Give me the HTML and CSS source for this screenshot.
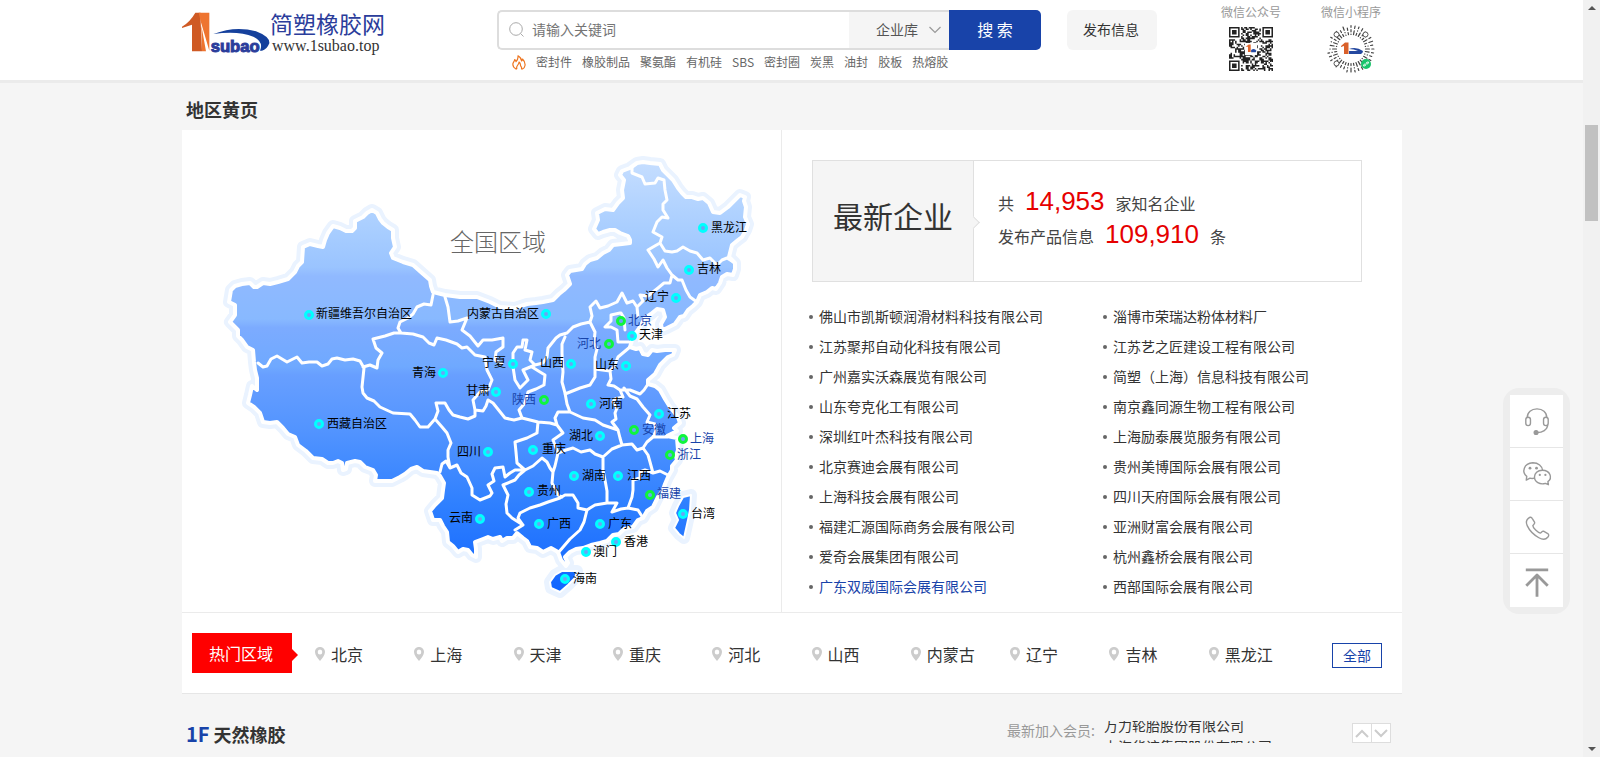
FILE: index.html
```html
<!DOCTYPE html>
<html lang="zh-CN">
<head>
<meta charset="utf-8">
<title>简塑橡胶网</title>
<link rel="stylesheet" href="styles.css">
</head>
<body>
<header class="site-header">
  <div class="wrap header-row">
    <a class="logo" href="#" aria-label="简塑橡胶网">
      <svg class="logo-mark" viewBox="0 0 264 144" width="88" height="48" aria-hidden="true">
        <path fill="#cf5a24" d="M0 50Q24 36 40 8H56V34L60 124H30V44L0 54z"/>
        <path fill="#ee7430" d="M42 8H82V122L56 34L50 8zM58 46L72 124H60z"/>
        <text class="logo-word" x="86" y="125">subao</text>
        <path fill="#15409c" d="M94 72Q160 46 222 64Q264 80 262 100Q254 120 240 122L234 122Q246 96 214 80Q170 62 94 72z"/>
      </svg>
      <span class="logo-text"><span class="logo-name">简塑橡胶网</span><span class="logo-url">www.1subao.top</span></span>
    </a>
    <div class="search">
      <form class="search-form">
        <label class="search-box">
          <svg width="16" height="16" viewBox="0 0 16 16" fill="none" stroke="#aaa" aria-hidden="true"><circle cx="7" cy="7" r="6.3"/><path d="M11.5 11.5L14.5 14.5"/></svg>
          <input type="text" placeholder="请输入关键词" aria-label="关键词">
        </label>
        <span class="kind">
          <select aria-label="搜索类型"><option>企业库</option></select>
          <svg width="12" height="8" viewBox="0 0 12 8" fill="none" stroke="#999" stroke-width="1.2" aria-hidden="true"><path d="M.5 1L6 6.5L11.5 1"/></svg>
        </span>
        <button type="button" class="search-btn">搜 索</button>
      </form>
      <nav class="hot-words">
        <svg width="14" height="15" viewBox="0 0 14 15" fill="none" stroke="#ee7520" stroke-width="1.2" stroke-linecap="round" stroke-linejoin="round" aria-hidden="true"><path d="M4 14C1.500 12.500.500 10.500 1 8.500C1.300 7 2.500 6.500 2.700 4.500C3.600 5 4 6 4 6.700C5.500 5 6.300 3 6 .8C8.500 2.300 9.500 4 9.600 6C10.300 5.600 10.500 4.800 10.500 4C12.500 6 13.300 8.500 13 10.500C12.700 12.500 11.800 13.500 10.500 14M4.800 13.800C4.200 12 5 11 5.800 10C6.600 9 7.200 8 7 7C9.300 8.500 7.800 10.500 9 11.500C9.700 12.200 9.800 13 9.500 14"/></svg>
        <a href="#">密封件</a><a href="#">橡胶制品</a><a href="#">聚氨酯</a><a href="#">有机硅</a><a href="#">SBS</a><a href="#">密封圈</a><a href="#">炭黑</a><a href="#">油封</a><a href="#">胶板</a><a href="#">热熔胶</a>
      </nav>
    </div>
    <button type="button" class="publish">发布信息</button>
    <div class="codes">
      <figure><figcaption>微信公众号</figcaption>
        <svg width="44" height="44" viewBox="0 0 29 29" aria-hidden="true">
          <path id="qr" fill="#222"/>
          <path fill="#fff" d="M10.500 10.500h8v8h-8z"/>
          <path fill="#e0662b" d="M11 13l2-1.500h1.300v5h-1.800v-3.500z"/>
          <path fill="#2448a0" d="M14.600 15.200q2-1.500 3.500.5l-.5.900h-3z"/>
        </svg>
      </figure>
      <figure><figcaption>微信小程序</figcaption>
        <svg width="48" height="48" viewBox="0 0 48 48" aria-hidden="true">
          <path id="mini" fill="none" stroke="#444" stroke-width="1.200" stroke-linecap="round"/>
          <g fill="#fff" stroke="#555"><circle cx="9.500" cy="9.500" r="2.500"/><circle cx="38.500" cy="9.500" r="2.500"/><circle cx="9.500" cy="38.500" r="2.500"/></g>
          <path fill="#d9602a" d="M14 21l4-3.500h3.500V29H17v-8l-3 1z"/>
          <path fill="#2448a0" d="M22 24q7-3 14 2q0 2-2 3h-12v-3h9q-4-2-9-2z"/>
          <circle cx="39" cy="39" r="5" fill="#19c46b"/>
          <path fill="none" stroke="#fff" stroke-width=".9" d="M39.500 37.500q2.500-1.500 2 .5q-.5 1-1.500 1M38.500 40.500q-2.500 1.500-2-.5q.5-1 1.500-1M38.500 40.500l1-3"/>
        </svg>
      </figure>
    </div>
  </div>
</header>

<main class="wrap">
  <h2 class="section-title">地区黄页</h2>
  <section class="panel">
    <div class="region">
      <svg class="map" viewBox="182 130 599 482" role="img" aria-label="全国区域">
        <defs>
          <linearGradient id="land" gradientUnits="userSpaceOnUse" x1="0" y1="160" x2="0" y2="590">
            <stop offset="0" stop-color="#c6deff"/><stop offset=".16" stop-color="#a9ceff"/><stop offset=".25" stop-color="#9ac4ff"/><stop offset=".27" stop-color="#90b9ff"/><stop offset=".37" stop-color="#88b9ff"/><stop offset=".39" stop-color="#7cabff"/><stop offset=".48" stop-color="#6fa9ff"/><stop offset=".5" stop-color="#689fff"/><stop offset=".63" stop-color="#5294ff"/><stop offset=".8" stop-color="#2f80ff"/><stop offset="1" stop-color="#1266ff"/>
          </linearGradient>
          <path id="outline" d="M231 290L235 286L242 284L250 283L254 287L257 287L263 283L270 284L278 282L288 279L295 272L298 266L302 262L303 247L310 244L318 246L323 247L325 240L328 233L333 226L340 228L346 231L352 231L355 228L355 221L363 217L367 213L372 210L377 213L380 219L383 223L388 227L393 230L393 238L395 247L391 253L393 258L403 262L413 265L422 273L430 280L431 286L433 292L445 295L460 297L477 297L490 302L500 307L515 308L527 304L536 303L543 302L553 300L559 294L564 290L570 284L567 275L570 271L582 269L585 264L590 260L597 258L603 253L609 250L613 245L622 244L630 243L630 240L628 236L620 233L615 230L610 230L603 232L598 234L594 229L598 220L597 213L605 209L613 210L618 203L623 198L622 190L624 180L620 175L622 171L630 168L637 163L643 162L650 163L660 164L663 170L667 174L673 180L678 188L682 193L686 197L692 197L698 199L703 198L709 203L713 212L720 213L728 207L734 201L740 195L745 197L744 201L746 207L745 217L748 224L746 230L742 237L738 240L732 245L729 257L735 263L735 269L733 275L727 274L722 277L720 283L716 289L712 288L707 292L700 295L697 302L693 306L688 310L684 316L680 317L675 324L667 328L662 330L661 324L665 317L663 310L657 309L651 314L645 318L640 327L633 337L630 347L636 349L640 348L643 354L648 355L652 350L657 351L665 350L675 350L673 355L668 357L660 365L655 374L648 380L648 384L655 386L660 390L665 399L670 407L678 417L680 423L674 428L677 431L667 436L677 438L678 450L676 456L677 460L672 466L672 470L668 477L665 484L663 490L658 497L653 507L647 511L643 518L638 520L633 527L624 529L619 534L613 535L607 541L600 543L591 545L583 548L576 549L570 552L565 557L568 563L566 566L561 560L558 552L551 548L543 552L537 548L530 547L527 541L523 538L517 533L513 538L507 538L502 541L500 537L493 539L488 537L483 539L475 542L476 549L476 557L472 555L468 550L463 549L458 552L453 546L448 542L447 532L443 526L440 520L433 520L430 511L435 505L442 498L443 490L444 483L440 476L437 473L430 472L423 471L417 467L411 469L405 474L400 477L392 481L375 481L376 475L373 470L365 467L360 462L355 461L347 463L346 469L343 470L342 463L338 461L333 463L328 463L322 459L313 458L306 451L298 445L295 437L288 434L283 428L277 422L270 423L263 422L260 413L254 407L248 403L250 395L252 386L257 390L257 378L255 370L254 362L253 350L247 347L242 340L238 336L238 330L230 322L235 315L235 305L229 302z"/>
          <path id="isles" d="M691 495L683 497L678 506L675 513L678 520L674 528L679 534L684 538L686 529L688 520L690 510zM550 582L555 575L562 571L577 571L575 578L568 585L560 592L551 588z"/>
        </defs>
        <g fill="#eaf3ff" stroke="#eaf3ff" stroke-width="12" stroke-linejoin="round"><use href="#outline"/><use href="#isles"/></g>
        <g fill="url(#land)" stroke="#fff" stroke-width="4" stroke-linejoin="round"><use href="#outline"/><use href="#isles" stroke-width="2"/></g>
        <path class="border" d="M433 295L431 305L424 304L417 307L413 314L408 318L400 322L398 328L401 333L394 333L385 336L373 339L376 348L382 353L378 360L377 368L370 365L363 367M258 363L263 367L267 366L271 359L277 356L282 359L287 362L297 357L302 363L309 362L317 362L322 366L328 364L332 359L337 358L345 360L353 359L360 361L364 368L362 387L363 393L367 398L374 401L380 407L393 413L410 414L415 420L420 427L428 427L435 419L442 427L447 433L451 443L448 450L448 457L450 468L446 461L442 464L440 472M435 419L438 411L436 403L445 403L449 410L453 415L460 417L468 419L475 416L475 410L483 411L486 406L488 400L493 403L505 418L514 420L522 418M401 333L413 334L423 337L429 343L434 345L437 338L446 340L457 344L462 348L467 347L475 355L485 357L487 370L492 380L488 390L480 392L473 400L475 410M445 297L448 307L450 322L458 321L467 318L462 330L470 336L478 346L483 340L492 340L503 338L503 347L496 352L495 360L502 364M522 347L523 340L527 340L525 350L532 352L530 360L535 365L523 370L528 380L520 388L515 380L513 367L513 353L517 347L522 347M532 367L540 372L545 375L544 385L536 389L528 392L525 403L519 410L522 418M535 365L543 363L547 357L548 348L552 343L556 338L560 335L567 333L573 327L581 324L590 322M565 337L562 344L562 353L563 372L562 382L565 393L567 404L570 412M590 322L595 332L594 343L597 349L595 357L595 377L590 385L580 388L565 394M590 322L592 316L590 307L596 301L600 308L608 306L617 302L622 293L627 303L633 301L637 307L638 317M637 307L643 301L640 295L648 296L658 288L664 283L670 283L672 275L667 268L663 260L658 267L654 259L648 250L653 247L660 243L662 237L653 232L657 222L662 217L668 218L663 210L663 204L667 200L665 190L664 180L658 178L655 183L645 184L642 177L632 173L632 167M660 243L665 251L672 252L677 251L683 247L690 251L697 253L703 260L710 258L717 265L722 260L727 258L735 263M672 275L678 280L682 280L686 290L690 297L697 302M620 313L611 315L611 321L605 327L611 327L617 330L618 342L629 342M621 313L624 318L625 330M630 347L624 352L618 357L614 367L610 371L595 369M610 371L611 379L608 385L614 386L620 390L623 397L615 399L613 402L617 408L615 413L616 419L612 422L618 430L603 425L595 420L583 418L570 412L558 412L555 418L557 425L550 423L538 422L522 418M621 390L630 390L640 394L644 390L648 384M624 388L630 396L637 399L643 407L650 415L647 422L655 424L656 431L653 437L667 437M618 430L620 438L622 445L612 449L603 457L595 454L590 450L581 452L573 448L566 450L558 453L553 440L563 433L557 425M622 445L632 444L637 450L643 448L647 442L653 437M643 448L648 455L650 462L653 473L660 471L668 475M653 473L645 470L640 472L640 478L633 480L633 490L632 497L628 508L638 510L643 518M603 457L603 470L605 480L607 491L607 503L617 503L612 512L621 509L628 508M607 503L595 505L590 508L587 510L578 508L578 503L573 495L565 495L560 498L548 502L540 505L530 508L520 513L518 518L523 525L515 530M587 510L584 522L580 530L570 539L558 553M538 422L537 433L527 438L515 442L516 452L517 463L525 470L533 466L542 458L547 462L550 468L553 472L555 466L558 453M553 472L552 483L558 495L562 497M525 470L519 475L515 480L503 485L508 495L506 504L507 513L512 518L523 525M450 468L457 465L461 473L467 477L472 488L472 495L480 500L490 496L492 493L488 485L494 481L492 474L495 468L503 467L505 477L510 473L515 470L525 470"/>
        <text class="map-title" x="450" y="251">全国区域</text>
        <g class="pins">
          <a href="#"><circle cx="309" cy="315" r="3.500"/><text x="316" y="318">新疆维吾尔自治区</text></a>
          <a href="#"><circle cx="546" cy="314" r="3.500"/><text x="467" y="318">内蒙古自治区</text></a>
          <a href="#"><circle cx="443" cy="373" r="3.500"/><text x="412" y="377">青海</text></a>
          <a href="#"><circle cx="513" cy="364" r="3.500"/><text x="482" y="367">宁夏</text></a>
          <a href="#"><circle cx="496" cy="392" r="3.500"/><text x="466" y="395">甘肃</text></a>
          <a href="#" class="on"><circle cx="544" cy="400" r="3.500"/><text x="512" y="404">陕西</text></a>
          <a href="#"><circle cx="571" cy="364" r="3.500"/><text x="540" y="367">山西</text></a>
          <a href="#" class="on"><circle cx="609" cy="344" r="3.500"/><text x="577" y="348">河北</text></a>
          <a href="#" class="on"><circle cx="621" cy="321" r="3.500"/><text x="628" y="325">北京</text></a>
          <a href="#"><circle cx="632" cy="336" r="3.500"/><text x="639" y="339">天津</text></a>
          <a href="#"><circle cx="676" cy="298" r="3.500"/><text x="645" y="301">辽宁</text></a>
          <a href="#"><circle cx="689" cy="270" r="3.500"/><text x="697" y="273">吉林</text></a>
          <a href="#"><circle cx="703" cy="228" r="3.500"/><text x="711" y="232">黑龙江</text></a>
          <a href="#"><circle cx="626" cy="366" r="3.500"/><text x="595" y="369">山东</text></a>
          <a href="#"><circle cx="319" cy="424" r="3.500"/><text x="327" y="428">西藏自治区</text></a>
          <a href="#"><circle cx="488" cy="452" r="3.500"/><text x="457" y="456">四川</text></a>
          <a href="#"><circle cx="480" cy="519" r="3.500"/><text x="449" y="522">云南</text></a>
          <a href="#"><circle cx="591" cy="404" r="3.500"/><text x="599" y="408">河南</text></a>
          <a href="#"><circle cx="659" cy="414" r="3.500"/><text x="667" y="418">江苏</text></a>
          <a href="#" class="on"><circle cx="634" cy="430" r="3.500"/><text x="642" y="434">安徽</text></a>
          <a href="#" class="on"><circle cx="683" cy="439" r="3.500"/><text x="690" y="443">上海</text></a>
          <a href="#" class="on"><circle cx="670" cy="455" r="3.500"/><text x="677" y="459">浙江</text></a>
          <a href="#"><circle cx="600" cy="436" r="3.500"/><text x="569" y="440">湖北</text></a>
          <a href="#"><circle cx="533" cy="450" r="3.500"/><text x="542" y="453">重庆</text></a>
          <a href="#"><circle cx="574" cy="476" r="3.500"/><text x="582" y="480">湖南</text></a>
          <a href="#"><circle cx="618" cy="476" r="3.500"/><text x="627" y="480">江西</text></a>
          <a href="#" class="on"><circle cx="650" cy="495" r="3.500"/><text x="657" y="498">福建</text></a>
          <a href="#"><circle cx="529" cy="492" r="3.500"/><text x="537" y="495">贵州</text></a>
          <a href="#"><circle cx="539" cy="524" r="3.500"/><text x="547" y="528">广西</text></a>
          <a href="#"><circle cx="600" cy="524" r="3.500"/><text x="608" y="528">广东</text></a>
          <a href="#"><circle cx="683" cy="514" r="3.500"/><text x="691" y="518">台湾</text></a>
          <a href="#"><circle cx="616" cy="542" r="3.500"/><text x="624" y="546">香港</text></a>
          <a href="#"><circle cx="586" cy="552" r="3.500"/><text x="593" y="556">澳门</text></a>
          <a href="#"><circle cx="565" cy="579" r="3.500"/><text x="573" y="583">海南</text></a>
        </g>
      </svg>
      <div class="latest">
        <div class="stats">
          <h3>最新企业</h3>
          <div class="figures">
            <p>共<b>14,953</b>家知名企业</p>
            <p>发布产品信息<b>109,910</b>条</p>
          </div>
        </div>
        <ul class="firms">
          <li><a href="#">佛山市凯斯顿润滑材料科技有限公司</a></li><li><a href="#">淄博市荣瑞达粉体材料厂</a></li>
          <li><a href="#">江苏聚邦自动化科技有限公司</a></li><li><a href="#">江苏艺之匠建设工程有限公司</a></li>
          <li><a href="#">广州嘉实沃森展览有限公司</a></li><li><a href="#">简塑（上海）信息科技有限公司</a></li>
          <li><a href="#">山东夸克化工有限公司</a></li><li><a href="#">南京鑫同源生物工程有限公司</a></li>
          <li><a href="#">深圳红叶杰科技有限公司</a></li><li><a href="#">上海励泰展览服务有限公司</a></li>
          <li><a href="#">北京赛迪会展有限公司</a></li><li><a href="#">贵州美博国际会展有限公司</a></li>
          <li><a href="#">上海科技会展有限公司</a></li><li><a href="#">四川天府国际会展有限公司</a></li>
          <li><a href="#">福建汇源国际商务会展有限公司</a></li><li><a href="#">亚洲财富会展有限公司</a></li>
          <li><a href="#">爱奇会展集团有限公司</a></li><li><a href="#">杭州鑫桥会展有限公司</a></li>
          <li><a href="#" class="active">广东双威国际会展有限公司</a></li><li><a href="#">西部国际会展有限公司</a></li>
        </ul>
      </div>
    </div>
    <div class="hot-areas">
      <strong class="tag">热门区域</strong>
      <svg width="0" height="0" aria-hidden="true"><symbol id="pin" viewBox="0 0 10 14"><path fill="#ccc" fill-rule="evenodd" d="M5 0C8 0 10 2.200 10 5C10 7.800 7.500 11 5 14C2.500 11 0 7.800 0 5C0 2.200 2 0 5 0zM5 2.500A2.300 2.500 0 0 0 5 7.500A2.300 2.500 0 0 0 5 2.500z"/></symbol></svg>
      <ul class="areas">
        <li><a href="#"><svg class="pin"><use href="#pin"/></svg>北京</a></li>
        <li><a href="#"><svg class="pin"><use href="#pin"/></svg>上海</a></li>
        <li><a href="#"><svg class="pin"><use href="#pin"/></svg>天津</a></li>
        <li><a href="#"><svg class="pin"><use href="#pin"/></svg>重庆</a></li>
        <li><a href="#"><svg class="pin"><use href="#pin"/></svg>河北</a></li>
        <li><a href="#"><svg class="pin"><use href="#pin"/></svg>山西</a></li>
        <li><a href="#"><svg class="pin"><use href="#pin"/></svg>内蒙古</a></li>
        <li><a href="#"><svg class="pin"><use href="#pin"/></svg>辽宁</a></li>
        <li><a href="#"><svg class="pin"><use href="#pin"/></svg>吉林</a></li>
        <li><a href="#"><svg class="pin"><use href="#pin"/></svg>黑龙江</a></li>
      </ul>
      <a class="all" href="#">全部</a>
    </div>
  </section>
  <section class="floor">
    <h2><span>1F</span> 天然橡胶</h2>
    <span class="joined">最新加入会员:</span>
    <div class="members"><ul><li><a href="#">万力轮胎股份有限公司</a></li><li><a href="#">上海华谊集团股份有限公司</a></li></ul></div>
    <div class="pager">
      <button type="button" aria-label="上一条"><svg width="14" height="9" viewBox="0 0 14 9"><path d="M1 8L7 2L13 8"/></svg></button>
      <button type="button" aria-label="下一条"><svg width="14" height="9" viewBox="0 0 14 9"><path d="M1 1L7 7L13 1"/></svg></button>
    </div>
  </section>
</main>

<aside class="side">
  <button type="button" aria-label="客服"><svg viewBox="0 0 30 30"><path d="M4.500 11.500C4.500 5.500 9 2 15 2S25.500 5.500 25.500 11.500M26.500 19C26 24.500 21 27.500 15 27.500"/><rect x="3" y="11" width="5" height="9" rx="2.500"/><rect x="22" y="11" width="5" height="9" rx="2.500"/><circle cx="14" cy="27.300" r="2" fill="#999"/></svg></button>
  <button type="button" aria-label="微信"><svg viewBox="0 0 30 30"><path d="M12 19.500C10.500 20 8.500 19.800 7.500 19.500L3.500 21.500L4 17.500C-1.500 13 .5 3.500 10.500 3C16.500 3 20.500 6.500 21 11"/><path d="M20.800 11C15.500 11 12.300 14.500 12.300 18.200C12.300 23.500 18 26.800 24 25L27.200 26.500L26.700 23.200C32 19 29 11 20.800 11z"/><g fill="#999" stroke="none"><circle cx="7.500" cy="8.800" r="1.500"/><circle cx="14.500" cy="8.800" r="1.500"/><circle cx="18" cy="16" r="1.200"/><circle cx="24" cy="16" r="1.200"/></g></svg></button>
  <button type="button" aria-label="电话"><svg viewBox="0 0 30 30"><path d="M6 5.500C7.500 4 9 4.200 10 6L12.500 10C13 11.500 11 12.500 10.500 13.500C10.500 16 16 21 18.500 21.500C19.500 21.500 20.500 19 22 19.500L26.500 22C28 23 27.800 24.500 26.500 26C24 29 20.500 28.500 17 26.500C11 23 7 19 4.500 13.500C2.800 10 3.500 7.500 6 5.500z"/></svg></button>
  <button type="button" aria-label="返回顶部"><svg viewBox="0 0 30 30"><path d="M3 3H27M15 8.500V32M3.500 20L15 8.500L26.500 20"/></svg></button>
</aside>

<div class="scrollbar" aria-hidden="true"><i class="up"></i><i class="thumb"></i><i class="down"></i></div>
<script src="codes.js"></script>
</body>
</html>
```

FILE: styles.css
```css
* { box-sizing: border-box; }
body, h2, h3, p, ul, figure { margin: 0; padding: 0; }
body {
  padding-right: 16px;
  background: #f5f5f5;
  color: #333;
  font: 14px/20px "Noto Sans CJK SC", sans-serif;
}
ul { list-style: none; }
a { color: inherit; text-decoration: none; }
button, input, select { font: inherit; color: inherit; border: 0; margin: 0; padding: 0; background: none; outline: 0; }
.wrap { max-width: 1220px; margin: 0 auto; }

.site-header { height: 83px; background: #fff; border-bottom: 3px solid #ebebeb; margin-right: -16px; padding-right: 16px; }
.header-row { display: flex; align-items: flex-start; padding-top: 10px; }
.logo { display: flex; width: 315px; }
.logo-mark { flex: none; }
.logo-word { font: bold 50px "Liberation Sans", sans-serif; fill: #2b3d9b; stroke: #2b3d9b; stroke-width: 3; }
.logo-text { display: flex; flex-direction: column; }
.logo-name { font-size: 23px; line-height: 26px; color: #2b3d9b; }
.logo-url { padding-left: 2px; font: 16px/20px "Liberation Serif", serif; color: #333; }

.search { width: 544px; }
.search-form { display: flex; height: 40px; }
.search-box { flex: 1; display: flex; align-items: center; gap: 7px; padding-left: 10px; border: 2px solid #ddd; border-right: 0; border-radius: 5px 0 0 5px; }
.search-box input { flex: 1; width: 100%; min-width: 0; padding-bottom: 2px; }
.search-box input::placeholder { color: #757575; opacity: 1; }
.kind { width: 100px; display: grid; align-items: center; background: #f5f5f5; border: solid #ddd; border-width: 2px 0; color: #555; }
.kind select { grid-area: 1 / 1; width: 100%; height: 36px; padding: 0 0 2px 27px; appearance: none; }
.kind svg { grid-area: 1 / 1; justify-self: end; margin-right: 8px; pointer-events: none; }
.search-btn { width: 92px; padding-bottom: 2px; background: #1843a9; color: #fff; font-size: 16px; border-radius: 0 5px 5px 0; }
.hot-words { display: flex; align-items: center; gap: 10px; height: 24px; padding-left: 15px; color: #666; font-size: 12px; white-space: nowrap; }
.publish { width: 90px; height: 40px; margin-left: 26px; padding: 0 2px 2px 0; background: #f5f5f5; border-radius: 6px; }
.codes { display: flex; gap: 40px; margin: -8px 0 0 64px; }
.codes figure { width: 60px; display: flex; flex-direction: column; align-items: center; }
.codes figcaption { color: #999; font-size: 12px; height: 23px; white-space: nowrap; }
.codes svg { margin-top: 2px; }
.codes svg[width="48"] { margin-top: 0; }

.section-title { height: 47px; padding: 6px 0 0 4px; font-size: 18px; line-height: 40px; }
.panel { background: #fff; border-bottom: 1px solid #e6e6e6; }
.region { display: grid; grid-template-columns: 599fr 621fr; border-bottom: 1px solid #ebebeb; }
.map { display: block; width: 100%; }
.border { fill: none; stroke: #fff; stroke-width: 3px; stroke-linejoin: round; stroke-linecap: round; }
.map-title { font-size: 24px; font-weight: 300; fill: #666; }
.pins { font-size: 12px; fill: #000; }
.pins circle { fill: #6ba4f5; stroke: #0ff; stroke-width: 3px; }
.pins .on { fill: #1843a9; }
.pins .on circle { stroke: #0ff53c; }

.latest { border-left: 1px solid #ebebeb; padding: 30px 5px 10px 27px; }
.stats { display: flex; height: 122px; margin: 0 35px 20px 3px; border: 1px solid #e0e0e0; }
.stats h3 { position: relative; width: 161px; padding-top: 30px; background: #f5f5f5; border-right: 1px solid #e0e0e0; font-size: 30px; line-height: 48px; font-weight: 400; text-align: center; }
.stats h3::after { content: ""; position: absolute; right: -5px; top: 57px; width: 8px; height: 8px; background: #f5f5f5; border: solid #e0e0e0; border-width: 1px 1px 0 0; transform: rotate(45deg); }
.figures { padding: 24px 0 0 24px; font-size: 16px; color: #444; }
.figures p { height: 33px; line-height: 33px; white-space: nowrap; }
.figures b { margin: 0 11px; color: #e60000; font: 26px/32px "Liberation Sans", Arial, sans-serif; }
.firms { display: grid; grid-template-columns: 1fr 1fr; }
.firms li { display: flex; align-items: center; gap: 6px; height: 30px; white-space: nowrap; }
.firms a { padding-bottom: 2px; }
.firms li::before { content: ""; width: 4px; height: 4px; border-radius: 50%; background: #666; }
.firms .active { color: #1843a9; }

.hot-areas { display: flex; align-items: center; padding: 20px 20px 20px 10px; font-size: 16px; }
.tag { position: relative; width: 100px; padding-right: 2px; background: #f00; color: #fff; font-weight: 400; line-height: 40px; text-align: center; }
.tag::after { content: ""; position: absolute; left: 100%; top: 16px; border: solid transparent; border-width: 6px 0 6px 6px; border-left-color: #f00; }
.areas { flex: 1; display: grid; grid-template-columns: repeat(10, 1fr); margin: 0 24px 0 23px; }
.areas a { display: flex; align-items: center; gap: 6px; padding-top: 2px; line-height: 24px; white-space: nowrap; }
.pin { width: 10px; height: 14px; }
.all { width: 50px; margin-top: 4px; border: 1px solid #1843a9; color: #1843a9; font-size: 14px; line-height: 23px; text-align: center; }

.floor { display: flex; align-items: flex-start; padding: 27px 11px 0 4px; }
.floor h2 { flex: 1; font-size: 18px; line-height: 26px; }
.floor h2 span { color: #1843a9; font-size: 20px; }
.joined { color: #999; line-height: 18px; margin-right: 9px; }
.members { width: 248px; height: 22px; overflow: hidden; }
.members ul { margin-top: -6px; line-height: 21px; }
.pager { display: flex; margin-top: 2px; border: 1px solid #ddd; background: #fff; }
.pager button { width: 18px; height: 18px; display: grid; place-items: center; }
.pager button + button { width: 19px; border-left: 1px solid #ddd; }
.pager path { fill: none; stroke: #ccc; stroke-width: 2px; }

.side { position: fixed; right: 30px; top: 388px; padding: 7px; border-radius: 16px; background: #ededed; }
.side button { display: grid; place-items: center; width: 53px; height: 53px; background: #fff; border-bottom: 1px solid #e6e6e6; }
.side svg { width: 28px; height: 28px; overflow: visible; fill: none; stroke: #999; stroke-width: 1.5px; stroke-linejoin: round; }
.side button:last-child { border-bottom: 0; }
.side button:last-child svg { width: 28px; height: 28px; stroke-width: 3px; }

.scrollbar { position: fixed; top: 0; right: 0; bottom: 0; width: 17px; background: #f1f1f1; }
.scrollbar i { position: absolute; left: 5px; border: 4px solid transparent; }
.scrollbar .up { top: 2px; border-bottom-color: #555; }
.scrollbar .down { bottom: 2px; border-top-color: #555; }
.scrollbar .thumb { left: 2px; top: 125px; width: 13px; height: 96px; border: 0; background: #c1c1c1; }
```

FILE: codes.js
```js
// Draws the two follow codes in the header.
const size = 29;
let seed = 7;
const next = () => (seed = (seed * 1103515245 + 12345) % 2147483648) / 2147483648;

const finder = (x, y) => {
  const dx = x < 8 ? x : size - 1 - x;
  const dy = y < 8 ? y : size - 1 - y;
  if (dx > 7 || dy > 7 || (x > 8 && y > 8)) return null;
  const ring = Math.max(Math.abs(dx - 3), Math.abs(dy - 3));
  return ring === 3 || ring < 2;
};

let cells = "";
for (let y = 0; y < size; y++) {
  for (let x = 0; x < size; x++) {
    const f = finder(x, y);
    const noise = next() < 0.55;
    if (f === null ? noise : f) cells += `M${x} ${y}h1v1h-1z`;
  }
}
document.getElementById("qr").setAttribute("d", cells);

let rays = "";
const rayCount = 36;
for (let i = 0; i < rayCount; i++) {
  const a = (i / rayCount) * Math.PI * 2;
  let r = 14.5;
  while (r < 23) {
    const len = 0.3 + Math.floor(next() * 3) * 1.8;
    const end = Math.min(r + len, 23.4);
    const p = d => `${(24 + Math.cos(a) * d).toFixed(1)} ${(24 + Math.sin(a) * d).toFixed(1)}`;
    rays += `M${p(r)}L${p(end)}`;
    r = end + 2.4;
  }
}
document.getElementById("mini").setAttribute("d", rays);
```
